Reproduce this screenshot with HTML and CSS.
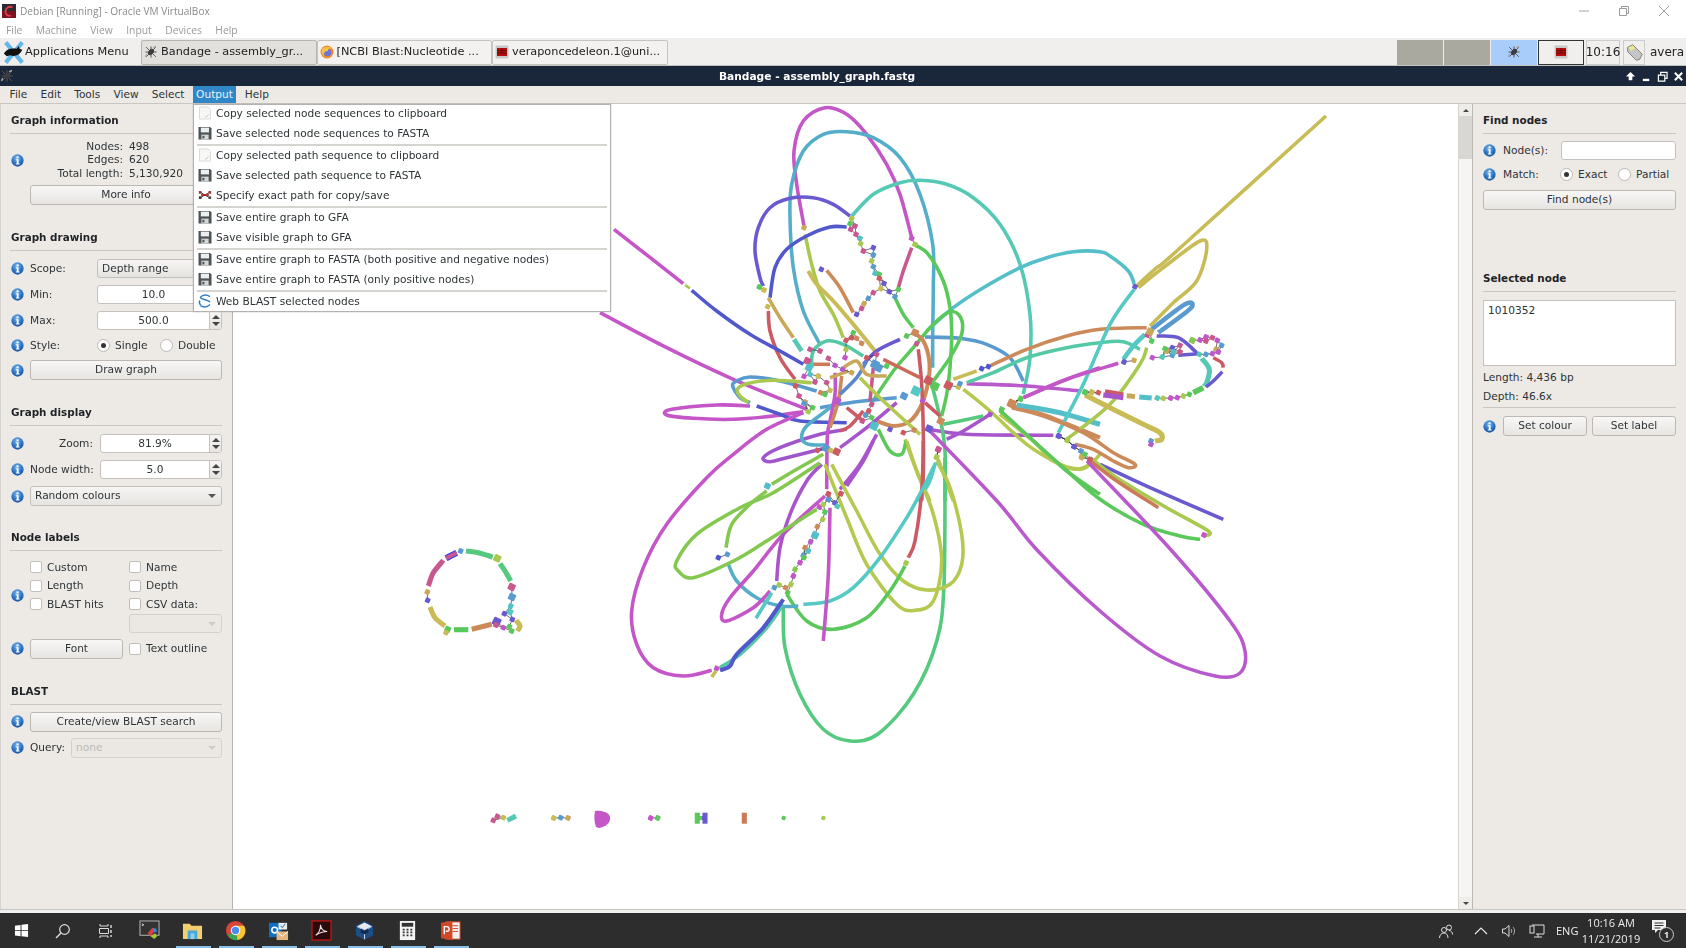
FILE: index.html
```html
<!DOCTYPE html>
<html lang="en">
<head>
<meta charset="utf-8">
<title>Debian [Running] - Oracle VM VirtualBox</title>
<link rel="stylesheet" href="styles.css">
</head>
<body>
<svg class="defs" width="0" height="0">
  <symbol id="i-info" viewBox="0 0 14 14">
    <defs><radialGradient id="g-info" cx=".45" cy=".3" r=".8"><stop offset="0" stop-color="#7db7ea"/><stop offset=".55" stop-color="#2a73c4"/><stop offset="1" stop-color="#124a93"/></radialGradient></defs>
    <circle cx="7" cy="7" r="6.6" fill="url(#g-info)"/>
    <rect x="6" y="2.6" width="2.2" height="2" fill="#fff"/>
    <path d="M5.2 5.6h3v4.6h1v1.2H5.2v-1.2h1V6.8h-1z" fill="#fff"/>
  </symbol>
  <symbol id="i-save" viewBox="0 0 14 14">
    <path d="M0.5 1h11.5l1.5 1.5V13.5H0.5z" fill="#4d5356"/>
    <rect x="2.8" y="1.6" width="8.2" height="4.8" fill="#eceff0"/>
    <rect x="3.4" y="8.6" width="7.2" height="4.9" fill="#d4d7d8"/>
    <rect x="4.4" y="9.8" width="2" height="2.6" fill="#4d5356"/>
  </symbol>
  <symbol id="i-copy" viewBox="0 0 14 14">
    <path d="M1.5 1h8.5l2.5 2.5V13H1.5z" fill="#f7f7f6" stroke="#dcdbd8"/>
    <path d="M7 11c1.5-.2 3-1.2 3.6-2.8" fill="none" stroke="#c6c6c4"/>
  </symbol>
  <symbol id="i-path" viewBox="0 0 16 14">
    <path d="M3 4l5 3-5 3M13 4l-5 3 5 3" fill="none" stroke="#333"/>
    <path d="M3.5 7h9" stroke="#b11d1d" stroke-width="2"/>
    <rect x="1" y="2.5" width="3" height="3" fill="#933"/><rect x="1" y="8.5" width="3" height="3" fill="#333"/>
    <rect x="12" y="2.5" width="3" height="3" fill="#933"/><rect x="12" y="8.5" width="3" height="3" fill="#444"/>
  </symbol>
  <symbol id="i-web" viewBox="0 0 14 14">
    <path d="M2 3.5C5 .5 9 .8 12 2.6M12 10.5C9 13.500 5 13.200 2 11.400M2 3.500C4 6 10 5.500 12 8M2 6.500C1 8 1.500 10 3 11" fill="none" stroke="#2f7fc4" stroke-width="1.400"/>
  </symbol>
  <symbol id="i-bug" viewBox="0 0 20 20">
    <path d="M3 3L17 17M17 3L3 17M10 2V18M2 10H18" stroke="#5b5b5b" stroke-width="1.400"/>
    <ellipse cx="10" cy="10" rx="3.500" ry="5" fill="#3d3d3d" transform="rotate(45 10 10)"/>
    <path d="M13 4l4-2M4 13l-2 4" stroke="#aaa" stroke-width="2"/>
  </symbol>
  <symbol id="i-mail" viewBox="0 0 14 14">
    <rect x="0.500" y="0.500" width="13" height="13" rx="1" fill="#c8c8c8"/>
    <rect x="2" y="3" width="10" height="8" fill="#b30d0d"/>
    <path d="M2 5.500h10M2 8h10M7 3v5" stroke="#5a0a0a" stroke-width=".8"/>
  </symbol>
</svg>

<div class="vm-title">
  <svg class="vm-logo" viewBox="0 0 14 14"><rect width="14" height="14" fill="#2b2b33"/><rect y="7" width="14" height="7" fill="#7a1622"/><path d="M10.500 3.500C7 1.500 3.500 4 3.500 7.500s3 5 5.500 4" fill="none" stroke="#e8394e" stroke-width="1.800"/></svg>
  <span>Debian [Running] - Oracle VM VirtualBox</span>
  <div class="vm-controls">
    <svg viewBox="0 0 12 12"><path d="M1 6h10" stroke="#a3a3a3"/></svg>
    <svg viewBox="0 0 12 12"><path d="M1.500 3.500h7v7h-7zM3.500 3.500v-2h7v7h-2" fill="none" stroke="#9a9a9a"/></svg>
    <svg viewBox="0 0 12 12"><path d="M1 1l10 10M11 1L1 11" stroke="#a3a3a3"/></svg>
  </div>
</div>
<div class="vm-menu"><span>File</span><span>Machine</span><span>View</span><span>Input</span><span>Devices</span><span>Help</span></div>

<div class="panel">
  <div class="apps">
    <svg class="apps-icon" viewBox="0 0 24 24"><path d="M3 1l18 22M21 1L3 23" stroke="#63b7ea" stroke-width="4.500"/><path d="M1 13c3-5 9-6 14-5l2-3 1 3 3 1-1 2c-2 4-8 6-12 4l-4 1z" fill="#111"/></svg>
    <span>Applications Menu</span>
  </div>
  <div class="tab active"><svg class="tab-icon"><use href="#i-bug"/></svg><span>Bandage - assembly_gr...</span></div>
  <div class="tab"><svg class="tab-icon" viewBox="0 0 14 14"><circle cx="7" cy="7" r="6.500" fill="#f08a2c"/><circle cx="7.500" cy="7.500" r="3.800" fill="#6d74d8"/><path d="M2 4c3-3 8-3 10 0-3-1-4 0-4 2-2 0-5 1-4 5C2 10 1 7 2 4z" fill="#f7c14a"/></svg><span>[NCBI Blast:Nucleotide ...</span></div>
  <div class="tab"><svg class="tab-icon"><use href="#i-mail"/></svg><span>veraponcedeleon.1@uni...</span></div>
  <div class="panel-fill"></div>
  <div class="pager"></div>
  <div class="pager"></div>
  <div class="pager pager-blue"><svg class="tab-icon"><use href="#i-bug"/></svg></div>
  <div class="pager pager-mail"><svg class="tab-icon"><use href="#i-mail"/></svg></div>
  <div class="clock">10:16</div>
  <div class="tray-box"><svg viewBox="0 0 22 22"><path d="M3 5l6-3 11 11-3 6-4 1-10-10z" fill="#c5c5c5" stroke="#777"/><path d="M4 5l5-2 3 3-5 3z" fill="#f1e68a"/></svg></div>
  <div class="user">avera</div>
</div>

<div class="titlebar">
  <svg class="titlebar-icon"><use href="#i-bug"/></svg>
  <span class="titlebar-text">Bandage - assembly_graph.fastg</span>
  <div class="titlebar-controls">
    <svg viewBox="0 0 12 12"><path d="M6 1l5 5H8v4H4V6H1z" fill="#fff"/></svg>
    <svg viewBox="0 0 12 12"><rect x="2" y="8.500" width="7" height="2.500" fill="#fff"/></svg>
    <svg viewBox="0 0 12 12"><path d="M1.500 4.500h7v6.500h-7zM4 4.500V1.500h7V8H8.500" fill="none" stroke="#fff" stroke-width="1.300"/></svg>
    <svg viewBox="0 0 12 12"><path d="M2 2l8 8M10 2l-8 8" stroke="#fff" stroke-width="2.200"/></svg>
  </div>
</div>

<div class="menubar">
  <span class="m m-file">File</span><span class="m">Edit</span><span class="m">Tools</span><span class="m">View</span><span class="m">Select</span>
  <div class="m m-open">Output
    <div class="dropdown">
      <div class="dd-item"><svg class="dd-icon"><use href="#i-copy"/></svg>Copy selected node sequences to clipboard</div>
      <div class="dd-item"><svg class="dd-icon"><use href="#i-save"/></svg>Save selected node sequences to FASTA</div>
      <div class="dd-sep"></div>
      <div class="dd-item"><svg class="dd-icon"><use href="#i-copy"/></svg>Copy selected path sequence to clipboard</div>
      <div class="dd-item"><svg class="dd-icon"><use href="#i-save"/></svg>Save selected path sequence to FASTA</div>
      <div class="dd-item"><svg class="dd-icon"><use href="#i-path"/></svg>Specify exact path for copy/save</div>
      <div class="dd-sep"></div>
      <div class="dd-item"><svg class="dd-icon"><use href="#i-save"/></svg>Save entire graph to GFA</div>
      <div class="dd-item"><svg class="dd-icon"><use href="#i-save"/></svg>Save visible graph to GFA</div>
      <div class="dd-sep"></div>
      <div class="dd-item"><svg class="dd-icon"><use href="#i-save"/></svg>Save entire graph to FASTA (both positive and negative nodes)</div>
      <div class="dd-item"><svg class="dd-icon"><use href="#i-save"/></svg>Save entire graph to FASTA (only positive nodes)</div>
      <div class="dd-sep"></div>
      <div class="dd-item"><svg class="dd-icon"><use href="#i-web"/></svg>Web BLAST selected nodes</div>
    </div>
  </div>
  <span class="m">Help</span>
</div>

<div class="main">
  <aside class="side left">
    <h2 class="heading">Graph information</h2>
    <div class="row row-info">
      <svg class="info"><use href="#i-info"/></svg>
      <div class="stats">
        <span class="k">Nodes:</span><span>498</span>
        <span class="k">Edges:</span><span>620</span>
        <span class="k">Total length:</span><span>5,130,920</span>
      </div>
    </div>
    <div class="row row-more"><span class="slot"></span><button class="btn grow">More info</button></div>

    <h2 class="heading h-next">Graph drawing</h2>
    <div class="stack">
      <div class="row"><svg class="info"><use href="#i-info"/></svg><span class="lbl lbl-w">Scope:</span><div class="combo grow">Depth range<i class="caret"></i></div></div>
      <div class="row"><svg class="info"><use href="#i-info"/></svg><span class="lbl lbl-w">Min:</span><div class="spin grow"><span class="spin-v">10.0</span><span class="spin-b"><i class="up"></i><i class="down"></i></span></div></div>
      <div class="row"><svg class="info"><use href="#i-info"/></svg><span class="lbl lbl-w">Max:</span><div class="spin grow"><span class="spin-v">500.0</span><span class="spin-b"><i class="up"></i><i class="down"></i></span></div></div>
      <div class="row row-style"><svg class="info"><use href="#i-info"/></svg><span class="lbl lbl-w">Style:</span><span class="radio on"></span><span class="opt opt-single">Single</span><span class="radio"></span><span class="opt">Double</span></div>
      <div class="row row-tall"><svg class="info"><use href="#i-info"/></svg><button class="btn grow">Draw graph</button></div>
    </div>

    <h2 class="heading h-next">Graph display</h2>
    <div class="stack">
      <div class="row"><svg class="info"><use href="#i-info"/></svg><span class="lbl lbl-r">Zoom:</span><div class="spin grow"><span class="spin-v">81.9%</span><span class="spin-b"><i class="up"></i><i class="down"></i></span></div></div>
      <div class="row"><svg class="info"><use href="#i-info"/></svg><span class="lbl lbl-r">Node width:</span><div class="spin grow"><span class="spin-v">5.0</span><span class="spin-b"><i class="up"></i><i class="down"></i></span></div></div>
      <div class="row row-tall"><svg class="info"><use href="#i-info"/></svg><div class="combo grow">Random colours<i class="caret"></i></div></div>
    </div>

    <h2 class="heading h-labels">Node labels</h2>
    <div class="labels">
      <svg class="info"><use href="#i-info"/></svg>
      <div class="label-grid">
        <label class="check"><i class="box"></i>Custom</label><label class="check"><i class="box"></i>Name</label>
        <label class="check"><i class="box"></i>Length</label><label class="check"><i class="box"></i>Depth</label>
        <label class="check"><i class="box"></i>BLAST hits</label><label class="check"><i class="box"></i>CSV data:</label>
        <span></span><div class="combo off csv"><i class="caret"></i></div>
      </div>
    </div>
    <div class="row row-font"><svg class="info"><use href="#i-info"/></svg><button class="btn font-btn">Font</button><label class="check"><i class="box"></i>Text outline</label></div>

    <h2 class="heading h-next">BLAST</h2>
    <div class="stack stack-blast">
      <div class="row row-tall"><svg class="info"><use href="#i-info"/></svg><button class="btn grow">Create/view BLAST search</button></div>
      <div class="row row-tall"><svg class="info"><use href="#i-info"/></svg><span class="lbl lbl-q">Query:</span><div class="combo off grow">none<i class="caret"></i></div></div>
    </div>
  </aside>

  <div class="canvas"><svg id="graph" viewBox="233 103 1225 806"></svg></div>

  <div class="scrollbar">
    <span class="sb-arrow"><i class="up"></i></span>
    <span class="sb-thumb"></span>
    <span class="sb-track"></span>
    <span class="sb-arrow"><i class="down"></i></span>
  </div>

  <aside class="side right">
    <h2 class="heading">Find nodes</h2>
    <div class="row row-find"><svg class="info"><use href="#i-info"/></svg><span class="lbl lbl-n">Node(s):</span><div class="input grow"></div></div>
    <div class="row row-match"><svg class="info"><use href="#i-info"/></svg><span class="lbl lbl-n">Match:</span><span class="radio on"></span><span class="opt opt-exact">Exact</span><span class="radio"></span><span class="opt">Partial</span></div>
    <button class="btn wide">Find node(s)</button>
    <h2 class="heading h-selected">Selected node</h2>
    <div class="textarea">1010352</div>
    <div class="meta">Length: 4,436 bp</div>
    <div class="meta">Depth: 46.6x</div>
    <div class="rule"></div>
    <div class="row"><svg class="info"><use href="#i-info"/></svg><button class="btn grow">Set colour</button><button class="btn grow btn-next">Set label</button></div>
  </aside>
</div>

<div class="strip"></div>

<footer class="taskbar">
  <svg class="tb tb-win" viewBox="0 0 16 16"><path d="M1 2.800L7 2v5.600H1zM8 1.800L15 1v6.600H8zM1 8.500h6v5.600l-6-.8zM8 8.500h7V15l-7-1z" fill="#fff"/></svg>
  <svg class="tb tb-search" viewBox="0 0 16 16"><circle cx="9.500" cy="6.500" r="4.800" fill="none" stroke="#ddd" stroke-width="1.200"/><path d="M6 10l-5 5" stroke="#ddd" stroke-width="1.400"/></svg>
  <svg class="tb tb-view" viewBox="0 0 16 16"><path d="M3 1v2h8V1M3 15v-2h8v2M2.500 5.500h9v5h-9z" fill="none" stroke="#ddd"/><path d="M14 2v3M14 7v3M14 12v2" stroke="#ddd" stroke-width="1.400"/></svg>
  <svg class="tb tb-app" viewBox="0 0 22 22"><rect x="1" y="1" width="20" height="15" fill="#333" stroke="#bbb"/><path d="M3 4l2 1-2 1" stroke="#ddd" fill="none"/><path d="M9 14l5-6 3 3-5 6z" fill="#d9433f"/><path d="M14 8l4 1 1 3-3 1z" fill="#3c7ed8"/><path d="M12 17l5-3 2 3-3 3z" fill="#9ccc3c"/></svg>
  <svg class="tb tb-app" viewBox="0 0 22 22"><path d="M1 4h7l2 2h11v14H1z" fill="#f3cf6f"/><rect x="6" y="11" width="10" height="9" fill="#46a7d8"/><rect x="9" y="14" width="4" height="6" fill="#8bd0ee"/></svg>
  <svg class="tb tb-app" viewBox="0 0 22 22"><circle cx="11" cy="11" r="10" fill="#d9443a"/><path d="M11 11L3 16a10 10 0 0 0 10 5z" fill="#36a853"/><path d="M11 6h9a10 10 0 0 1-7 15z" fill="#f7c52d"/><circle cx="11" cy="11" r="5" fill="#fff"/><circle cx="11" cy="11" r="3.800" fill="#4b8bf0"/></svg>
  <svg class="tb tb-app" viewBox="0 0 22 22"><rect x="1" y="3" width="13" height="15" fill="#0d70c4"/><circle cx="7" cy="10.500" r="3" fill="none" stroke="#fff" stroke-width="1.600"/><rect x="11" y="3" width="9" height="7" fill="#fff" opacity=".9"/><path d="M13 6l2 2 3-4" stroke="#1465b0" fill="none"/><rect x="9" y="12" width="12" height="9" fill="#e6b77d"/><path d="M9 12l6 5 6-5" fill="none" stroke="#fff"/></svg>
  <svg class="tb tb-app" viewBox="0 0 22 22"><rect x="1" y="1" width="20" height="20" fill="#2a0b0b" stroke="#c11414" stroke-width="1.400"/><path d="M5 16c3-2 5-6 5-11 0 4 3 7 7 7-4 0-8 1-12 4z" fill="none" stroke="#f0e4e4" stroke-width="1.100"/></svg>
  <svg class="tb tb-app" viewBox="0 0 22 22"><path d="M11 1l9 5v10l-9 5-9-5V6z" fill="#1b4f86"/><path d="M11 2.500l7.500 4-7.500 4-7.500-4z" fill="#e6eaf0"/><path d="M11 11v9M3.500 7L11 11l7.500-4" stroke="#dde" fill="none"/><path d="M7 9l4 2 4-2v4l-4 2-4-2z" fill="#0f2d52"/></svg>
  <svg class="tb tb-app" viewBox="0 0 22 22"><rect x="3" y="1" width="16" height="20" fill="#f4f4f4"/><rect x="5" y="3" width="12" height="4" fill="#333"/><path d="M6 10h2M10 10h2M14 10h2M6 13h2M10 13h2M14 13h2M6 16h2M10 16h2M14 16h2" stroke="#333" stroke-width="1.800"/></svg>
  <svg class="tb tb-app" viewBox="0 0 22 22"><rect x="6" y="2" width="15" height="18" fill="#f2f0ee" stroke="#d24726"/><path d="M13 6h6M13 9h6M13 12h6" stroke="#d24726"/><path d="M1 3l12-2v20L1 19z" fill="#d24726"/><path d="M4.500 15V7h2.700a2.200 2.200 0 0 1 0 4.800H6" fill="none" stroke="#fff" stroke-width="1.400"/></svg>
  <div class="underlines"><i></i><i></i><i></i><i></i><i></i><i></i><i></i></div>

  <div class="tray">
    <svg class="tr tr-person" viewBox="0 0 16 16"><circle cx="11" cy="4.500" r="2.500" fill="none" stroke="#ddd"/><circle cx="6" cy="7" r="2.500" fill="none" stroke="#ddd"/><path d="M1.500 15c0-3 2-5 4.500-5s4 2 4 5M11 7.500c2 0 3.500 1.500 3.500 4" fill="none" stroke="#ddd"/></svg>
    <svg class="tr tr-chev" viewBox="0 0 16 16"><path d="M2 11l6-6 6 6" fill="none" stroke="#e6e6e6" stroke-width="1.200"/></svg>
    <svg class="tr tr-sound" viewBox="0 0 16 16"><path d="M1.500 6h2.500l4-3.500v11L4 10H1.500z" fill="none" stroke="#ddd"/><path d="M10 6c1 1 1 3 0 4M12 4c2 2 2 6 0 8" fill="none" stroke="#aaa"/></svg>
    <svg class="tr tr-net" viewBox="0 0 16 16"><path d="M3 2h12v9H7M9 11v3M5 14h8" fill="none" stroke="#ddd"/><rect x="1" y="3" width="4" height="7" fill="#2d2d2d" stroke="#ddd"/></svg>
    <span class="tr-lang">ENG</span>
    <div class="tr-time"><span>10:16 AM</span><span>11/21/2019</span></div>
    <div class="tr-note"><svg viewBox="0 0 14 14"><path d="M0 0h14v10H6L3 13v-3H0z" fill="#f2f2f2"/><path d="M2.500 3h9M2.500 5.500h9M2.500 8h6" stroke="#2d2d2d"/></svg><span class="badge">1</span></div>
  </div>
</footer>
<script src="graph.js"></script>
</body>
</html>
```
FILE: styles.css
```css
* { box-sizing: border-box; }
html, body { margin: 0; height: 100%; }
body {
  width: 1686px; height: 948px; overflow: hidden; display: flex; flex-direction: column;
  background: #fff; color: #2e3436;
  font: 10.6px/1.2 "DejaVu Sans", sans-serif;
  filter: blur(.35px);
}
.defs { position: absolute; }
button { font: inherit; color: inherit; }

.vm-title { height: 22px; flex: none; display: flex; align-items: center; font: 10.1px "Open Sans", sans-serif; color: #8a8a8a; padding-left: 2px; }
.vm-logo { width: 14px; height: 14px; margin-right: 4px; }
.vm-controls { margin-left: auto; display: flex; gap: 28px; margin-right: 16px; }
.vm-controls svg { width: 12px; height: 12px; }
.vm-menu { height: 16px; flex: none; display: flex; gap: 13.500px; padding-left: 6px; align-items: center; font: 10.3px "Open Sans", sans-serif; color: #9a9a9a; }

.panel { height: 28px; flex: none; display: flex; align-items: center; background: #f0efed; border-bottom: 1px solid #c4c2be; padding: 1px 0 0 3px; color: #222; font-size: 11.3px; }
.apps { width: 138px; display: flex; align-items: center; gap: 0; }
.apps-icon { width: 22px; height: 23px; flex: none; }
.tab { width: 175.500px; height: 25px; display: flex; align-items: center; padding-left: 2px; gap: 3px; border: 1px solid #c6c4bf; border-radius: 2px; background: #f3f2f0; white-space: nowrap; }
.tab.active { background: #e2e0dc; border-color: #b7b5b0; }
.tab-icon { width: 14px; height: 14px; flex: none; }
.panel-fill { flex: 1; }
.pager { width: 46px; height: 25px; background: #aaa9a0; margin-right: 1px; display: flex; align-items: center; justify-content: center; }
.pager-blue { background: #a9cdfb; }
.pager-mail { background: #f0efed; border: 1px solid #333; }
.clock { width: 34px; height: 25px; margin-left: 1px; border: 1px solid #ccc; display: flex; align-items: center; justify-content: center; font-size: 12px; }
.tray-box { width: 22px; height: 25px; margin-left: 3px; border: 1px solid #ccc; display: flex; align-items: center; justify-content: center; }
.tray-box svg { width: 19px; height: 19px; }
.user { width: 41px; padding-left: 5px; font-size: 12px; }

.titlebar { height: 20px; flex: none; position: relative; display: flex; align-items: center; background: #1a2639; color: #fff; }
.titlebar-icon { width: 14px; height: 14px; }
.titlebar-text { position: absolute; left: 0; width: 1634px; margin-top: 2px; text-align: center; font-weight: bold; font-size: 10.650px; }
.titlebar-controls { margin-left: auto; display: flex; gap: 5px; padding-right: 2px; }
.titlebar-controls svg { width: 11px; height: 11px; }

.menubar { height: 18px; flex: none; display: flex; align-items: center; background: #edeae6; padding-left: 3px; border-bottom: 1px solid #c9c6c1; position: relative; z-index: 5; }
.m { padding: 0 6.600px; height: 17px; line-height: 17px; }
.m-open { position: absolute; left: 193px; width: 43px; padding: 0; text-align: center; background: #2f87c8; color: #e8f2fa; }
.m-open + .m { margin-left: 47px; }
.dropdown { position: absolute; left: 0; top: 18px; width: 418px; height: 208px; background: #fff; border: 1px solid #b4b2ae; color: #2e3436; text-align: left; box-shadow: 0 0 1px #999; }
.dd-item { height: 20px; display: flex; align-items: center; padding: 0 0 2px 4px; white-space: nowrap; }
.dd-item:first-child { margin-top: -1px; }
.dd-icon { width: 14px; height: 14px; margin-right: 4px; flex: none; }
.dd-sep { height: 2px; margin: 0 3px; background: #d6d4d0; }

.main { height: 806px; flex: none; display: flex; background: #edeae6; border-bottom: 1px solid #c9c6c1; }
.side { flex: none; background: #edeae6; padding-top: 10px; }
.left { width: 233px; padding-left: 9px; padding-right: 10px; border-right: 1px solid #b6b3ae; border-left: 1px solid #d5d3cf; }
.left .heading { padding-left: 1px; }
.left .info { margin-left: 1px; margin-right: 6px; }
.right { width: 215px; padding-left: 10px; padding-right: 11px; border-left: 1px solid #bcb9b4; }
.heading { height: 20px; margin: 0; font-size: 10.400px; font-weight: bold; line-height: 13px; color: #1f2326; border-bottom: 1.500px solid #c9c6c1; }
.h-next { margin-top: 26px; }
.h-labels { margin-top: 25px; }
.h-selected { margin-top: 62px; }
.row { display: flex; align-items: center; height: 20px; white-space: nowrap; }
.info { width: 13px; height: 13px; flex: none; margin-right: 7px; }
.slot { width: 20px; flex: none; }
.grow { flex: 1; min-width: 0; }
.row-info { height: 40px; margin-top: 6px; }
.stats { display: grid; grid-template-columns: 93px auto; column-gap: 6px; line-height: 13.300px; }
.k { text-align: right; }
.row-more { margin-top: 5px; }
.stack { display: flex; flex-direction: column; gap: 7px; margin-top: 8px; }
.stack .row { height: 19px; }
.stack .row-tall { height: 20px; }
.stack .row-style { height: 17px; margin-bottom: -1px; }
.stack-blast { margin-top: 7px; gap: 6px; }
.lbl-w { width: 67px; flex: none; }
.lbl-r { width: 70px; padding-right: 7px; text-align: right; flex: none; }
.lbl-q { width: 41px; flex: none; }
.lbl-n { width: 58px; flex: none; }
.btn { height: 20px; padding: 0 0 1px; background: linear-gradient(#f8f7f6, #e7e5e2); border: 1px solid #bcb9b4; border-radius: 3px; text-align: center; }
.btn-next { margin-left: 5px; }
.combo { position: relative; height: 100%; line-height: 17px; padding-left: 4px; background: linear-gradient(#f6f5f3, #e6e4e1); border: 1px solid #c2bfba; border-radius: 3px; }
.combo.off { background: #ebe8e4; color: #bdbab6; border-color: #d4d1cd; }
.caret { position: absolute; right: 5px; top: 7px; border: 4px solid transparent; border-top: 4px solid #555; border-bottom: 0; }
.combo.off .caret { border-top-color: #ccc; }
.spin { display: flex; height: 100%; background: #fff; border: 1px solid #c5c2bd; border-radius: 3px; overflow: hidden; }
.spin-v { flex: 1; text-align: center; line-height: 16px; }
.spin-b { width: 12px; flex: none; display: flex; flex-direction: column; align-items: center; justify-content: center; gap: 3px; background: linear-gradient(#f6f5f3, #e6e4e1); border-left: 1px solid #c5c2bd; }
.up, .down { display: block; width: 0; height: 0; border: 4px solid transparent; }
.up { border-top: 0; border-bottom: 4px solid #444; }
.down { border-bottom: 0; border-top: 4px solid #444; }
.radio { width: 13px; height: 13px; flex: none; margin-right: 5px; border-radius: 50%; background: #fff; border: 1px solid #bcb9b4; position: relative; }
.radio.on::after { content: ""; position: absolute; left: 3px; top: 3px; width: 5px; height: 5px; border-radius: 50%; background: #333; }
.opt-single { width: 45px; }
.opt-exact { width: 41px; }
.labels { display: flex; align-items: flex-start; margin-top: 7px; }
.labels .info { margin-top: 31px; }
.label-grid { display: grid; grid-template-columns: 99px 93px; grid-auto-rows: 18.400px; }
.check { display: flex; align-items: center; }
.box { width: 12px; height: 12px; margin-right: 5px; background: #fff; border: 1px solid #c2bfba; border-radius: 2px; flex: none; }
.csv { height: 19px; margin-top: 1px; }
.row-font { margin-top: 7px; }
.font-btn { width: 93px; margin-right: 6px; }

.canvas { width: 1225px; flex: none; background: #fff; }
#graph { display: block; width: 1225px; height: 806px; }
.scrollbar { width: 14px; flex: none; display: flex; flex-direction: column; align-items: center; background: #f6f5f3; border-left: 1px solid #d7d5d1; }
.sb-arrow { height: 12px; width: 100%; flex: none; display: flex; align-items: center; justify-content: center; background: #efedea; }
.sb-arrow i { border-width: 3px; border-left-color: transparent; }
.sb-thumb { height: 43px; width: 100%; flex: none; background: #d9d7d3; }
.sb-track { flex: 1; }

.row-find { height: 19px; margin-top: 7px; }
.row-match { height: 18px; margin-top: 5px; }
.row-match .radio { margin-left: -1px; }
.input { height: 19px; background: #fff; border: 1px solid #c5c2bd; border-radius: 3px; }
.wide { display: block; width: 100%; margin-top: 7px; }
.textarea { height: 66px; margin-top: 8px; background: #fff; border: 1px solid #c5c2bd; padding: 3px 4px; }
.meta { height: 19px; line-height: 19px; }
.textarea + .meta { margin-top: 2px; }
.rule { height: 1px; background: #c9c6c1; margin: 1px 0 8px; }

.strip { height: 3px; flex: none; background: #f0f0ee; }
.taskbar { flex: 1; position: relative; display: flex; align-items: center; background: #2d2d2d; color: #eee; font: 11px "Open Sans", sans-serif; }
.tb { flex: none; }
.tb-win { width: 15px; height: 15px; margin-left: 14px; }
.tb-search { width: 16px; height: 16px; margin-left: 26px; }
.tb-view { width: 16px; height: 16px; margin-left: 26px; }
.tb-app { width: 21px; height: 21px; margin-left: 22px; }
.tb-view + .tb-app { margin-left: 26px; }
.underlines { position: absolute; left: 176px; bottom: 0; display: flex; gap: 8px; }
.underlines i { display: block; width: 35px; height: 2px; background: #8ac1ea; }
.tray { margin-left: auto; display: flex; align-items: center; height: 100%; padding-right: 3px; }
.tr { width: 16px; height: 16px; flex: none; }
.tr-chev { margin-left: 19px; }
.tr-sound { margin-left: 12px; }
.tr-net { margin-left: 12px; }
.tr-lang { margin-left: 11px; width: 24px; font-size: 11px; }
.tr-time { margin-left: -3px; width: 68px; display: flex; flex-direction: column; align-items: center; line-height: 16px; font-size: 11px; }
.tr-note { position: relative; width: 22px; height: 22px; margin-left: 7px; margin-right: 9px; }
.tr-note svg { width: 14px; height: 14px; display: block; }
.badge { position: absolute; left: 7px; top: 7px; width: 15px; height: 15px; border: 1px solid #ccc; border-radius: 50%; background: #2d2d2d; text-align: center; font-size: 9px; line-height: 13px; font-weight: bold; }
```
FILE: graph.js
```js
// Draws the assembly graph: contigs as smooth thick curves, short nodes as small blocks.
const ORIGIN = { A: [600, 100], B: [1000, 250], C: [640, 440], D: [410, 530] };
const c = { mag: '#c456c8', sky: '#55aec9', teal: '#55c9b4', pb: '#6a5acf', blu: '#5058cc', grn: '#5ac85a', lime: '#a9c850', ylw: '#b5c850', kha: '#c9bb55', ora: '#cc8a5a', red: '#cc5a63', pnk: '#c9588f', pur: '#a855cc', lb: '#5a9bcf', cy: '#55bfc9', cy2: '#55c9c4', mnt: '#55c97e', lg: '#84c850', tan: '#c9a85a', pm: '#b85acc' };

const CURVES = [
  ['A', c.mag, 3.5, [612,375,590,250,582,150,610,60,675,20,740,40,800,100,860,190,900,280,935,410]],
  ['A', c.lime, 3.5, [615,400,635,490,660,570,700,640,730,710]],
  ['A', c.sky, 3.5, [660,730,610,630,580,500,570,350,575,250,610,150,670,100,740,92,820,110,900,170,960,280,998,430,1000,560,998,700,998,800]],
  ['A', c.teal, 3.5, [755,345,820,280,900,245,960,238,1040,250,1120,290,1200,370,1260,490,1290,640,1290,770,1270,880]],
  ['A', c.pb, 3.5, [750,345,700,310,640,290,570,292,510,320,475,380,465,450,480,530,490,555]],
  ['A', c.blu, 3.5, [740,378,690,378,620,405,560,445,525,500,510,590]],
  ['A', c.tan, 3.5, [505,590,540,650,580,710]],
  ['A', c.red, 3.5, [505,630,510,690,540,770,585,835]],
  ['A', c.teal, 4.5, [582,715,605,750]],
  ['A', c.mag, 3.5, [42,385,250,548]],
  ['A', c.lime, 2.5, [255,552,270,562]],
  ['A', c.blu, 3.5, [275,568,350,630,450,700,540,750,610,790]],
  ['A', c.mag, 3.5, [0,635,200,740,400,835,620,925]],
  ['A', c.mag, 3.5, [450,915,350,912,215,925,200,942,280,952,400,955,520,945,610,932]],
  ['A', c.lb, 3.5, [650,870,540,840,450,828,410,840,398,855,420,890,450,905]],
  ['A', c.blu, 3.5, [470,915,540,940,600,960,740,965]],
  ['A', c.lime, 3.5, [635,845,520,838,440,848,412,865,420,885,445,905]],
  ['A', c.kha, 4, [625,510,650,550,700,600,760,670,825,750]],
  ['A', c.ora, 3.5, [680,508,720,560,760,635]],
  ['A', c.pb, 3.5, [790,790,830,750,900,715]],
  ['A', c.lb, 3.5, [975,708,1080,712,1160,730,1230,770,1270,840]],
  ['A', c.cy, 3.5, [980,690,1060,620,1150,560,1260,500,1340,470,1420,452,1500,452,1530,465,1585,510,1603,550]],
  ['A', c.grn, 3.5, [945,432,985,460,1030,540,1050,620,1055,700,1050,800,1040,880,1025,945]],
  ['A', c.pnk, 3.5, [935,440,910,510,895,560]],
  ['A', c.grn, 3.5, [885,590,910,640,940,680]],
  ['A', c.grn, 3.5, [815,905,880,810,940,740,1000,670,1050,632,1082,650,1085,700,1050,770,1000,840]],
  ['A', c.ora, 4, [830,960,880,975,930,960,965,910,985,840,988,780,970,720,940,695]],
  ['A', c.red, 3.5, [955,745,965,850,970,1000,970,1120,965,1200]],
  ['A', '#cc6a5a', 3.5, [850,775,960,830]],
  ['A', c.lb, 3.5, [660,920,750,905,890,890]],
  ['A', c.pur, 3.5, [720,1040,800,980,890,905]],
  ['A', c.pur, 3.5, [985,985,1100,1000,1360,1003]],
  ['A', c.pur, 3.5, [1040,1015,1090,990,1170,940]],
  ['A', c.pm, 3.5, [1100,848,1280,855,1440,870]],
  ['A', c.mag, 3.5, [1270,890,1400,835,1500,800]],
  ['A', c.ora, 3.5, [1170,795,1280,745,1400,705,1500,685,1640,680]],
  ['A', '#55c9a5', 3.5, [1100,845,1180,815,1280,770,1400,740,1500,725,1570,722,1620,745]],
  ['A', c.kha, 3.5, [1060,835,1130,810]],
  ['A', c.mnt, 3.5, [990,830,1020,950,1035,1050,1035,1200]],
  ['A', c.ylw, 3.5, [915,1015,950,1110,990,1200]],
  ['A', c.ylw, 3.5, [1015,1075,1060,1200]],
  ['A', c.cy2, 3.5, [1005,1090,985,1150,950,1200]],
  ['A', c.grn, 3.5, [835,985,870,1050,905,1060,918,1020]],
  ['A', '#a055cc', 3.5, [680,1040,560,1070,510,1082,490,1070,540,1040,660,1000,740,985]],
  ['A', c.red, 3.5, [720,990,750,975,790,930]],
  ['A', c.sky, 3.5, [720,885,690,920,620,975,605,1010,625,1030,680,1032]],
  ['A', c.mag, 3.5, [705,815,705,880,690,960,682,1010,680,1165]],
  ['A', c.ora, 3.5, [725,825,715,900,690,980]],
  ['A', c.pnk, 3.5, [820,800,810,900]],
  ['A', '#5a88cf', 3.5, [720,880,770,830,800,780]],
  ['A', c.pur, 3.5, [830,1000,780,1090,720,1165]],
  ['A', c.ylw, 3.5, [780,830,850,900,960,1000]],
  ['A', c.ylw, 3.5, [1090,865,1170,930,1280,1030,1380,1090,1430,1105,1470,1090,1500,1060]],
  ['A', c.grn, 3.5, [1200,930,1300,1020,1400,1110,1500,1180]],
  ['A', c.ora, 4, [1240,915,1340,945,1500,1010]],
  ['A', c.cy, 5, [1250,912,1380,935,1500,970]],
  ['A', '#55c9a5', 3.5, [635,800,640,750,680,720,730,730,790,765]],
  ['A', c.tan, 3.5, [690,830,745,810]],
  ['A', c.tan, 3.5, [730,800,770,780,800,820,860,825]],
  ['A', '#cc7a55', 3.5, [640,790,690,790]],
  ['A', c.red, 3.5, [975,905,1020,945]],
  ['A', c.red, 3.5, [740,920,790,960]],
  ['A', c.mnt, 3.5, [1030,970,1150,945]],
  // right lobe
  ['B', c.cy2, 3.5, [175,545,250,400,330,220,403,115]],
  ['B', c.lime, 3.5, [200,565,330,460,420,340,440,290]],
  ['B', c.kha, 3.5, [410,105,470,50,530,0,978,-405]],
  ['B', c.kha, 3.5, [415,110,490,50,600,-30,620,-5,590,90,520,155,450,225]],
  ['B', c.cy2, 4.5, [370,325,400,285,435,250]],
  ['B', c.lb, 4.5, [455,235,555,160,572,172,475,245]],
  ['B', c.pb, 3.5, [470,255,535,260,590,305]],
  ['B', c.pb, 3.5, [535,313,595,308]],
  ['B', c.teal, 5, [605,322,628,355,620,395,612,405]],
  ['B', c.red, 3.5, [640,320,665,335,670,350]],
  ['B', c.pb, 3.5, [667,362,640,390,618,408]],
  ['B', c.grn, 5.5, [580,425,610,410]],
  ['B', c.red, 5, [315,422,370,432]],
  ['B', c.pur, 5, [310,432,370,440]],
  ['B', c.tan, 5, [380,434,405,437]],
  ['B', c.cy, 5, [418,438,455,441]],
  ['B', c.mag, 3.5, [70,440,200,385,355,337]],
  ['B', c.kha, 5, [255,432,330,470,430,520,480,545,485,565,465,570]],
  ['B', c.ora, 3.5, [35,470,130,495,250,545,340,605,405,640,385,650,340,630,280,595,225,580]],
  ['B', c.ylw, 3.5, [0,490,100,570,160,630,235,655,265,645]],
  ['B', c.grn, 3.5, [0,478,90,560,190,650,300,745,430,820,540,855,600,865]],
  ['B', c.pb, 3.5, [300,640,450,710,670,805]],
  ['B', c.lime, 3.5, [270,620,350,680,500,770,625,840,610,855]],
  ['B', '#cc7a55', 3.5, [265,625,350,690,475,770]],
  ['B', c.pm, 3.5, [-216,534,-9,750,114,900,300,1080,480,1215,645,1275,720,1266,735,1200,690,1110,516,900,261,630]],
  // lower lobes
  ['C', c.mag, 3.5, [490,-85,380,-35,280,40,200,110,80,250,10,380,-25,510,-10,610,40,680,130,705,215,688]],
  ['C', c.mnt, 3.5, [430,500,435,620,480,760,550,865,630,900,715,878,820,760,890,600,912,430,915,50]],
  ['C', c.ylw, 3.5, [555,70,620,230,680,370,770,490,825,508,880,480,905,360,880,220,830,90,800,0]],
  ['C', c.ylw, 3.5, [575,70,650,210,720,340,790,420,860,447,930,430,965,370,965,280,930,140,890,60]],
  ['C', c.red, 3.5, [850,0,845,150,825,300,805,350]],
  ['C', c.grn, 3.5, [440,460,500,540,580,565,680,530,750,450,795,375]],
  ['C', c.cy2, 3.5, [490,490,570,480,640,440,720,350,800,230,850,140,887,65]],
  ['C', c.mag, 3.5, [570,200,565,400,550,600]],
  ['C', c.sky, 3.5, [265,370,290,420,350,470,420,495,475,495]],
  ['C', c.mag, 3.5, [390,450,340,500,260,540,245,520,270,470,340,390,430,280,555,165]],
  ['C', c.cy2, 3.5, [395,455,348,532]],
  ['C', c.pur, 3.5, [410,420,420,320,450,220,500,120,545,70]],
  ['C', c.lg, 3.5, [530,205,380,300,280,360,160,410,115,390,110,360,170,280,300,200,400,155,540,65]],
  ['C', c.lg, 3.5, [258,320,275,250,330,190,380,150]],
  ['C', c.lg, 3.5, [395,130,470,85,550,40]],
  ['C', c.pur, 3.5, [620,135,670,60,700,0]],
  ['C', '#55c9a5', 3.5, [240,680,300,640,380,560,430,490]],
  ['C', c.blu, 4, [240,688,270,675,290,640,370,560,430,475]],
  ['C', c.kha, 3.5, [228,690,215,708]],
  // small ring
  ['D', c.pnk, 5, [55,165,70,125,100,88]],
  ['D', '#3a3af0', 6, [108,82,140,65]],
  ['D', c.pnk, 4, [108,82,140,65]],
  ['D', c.mnt, 5, [168,60,205,65,248,78]],
  ['D', c.mnt, 5, [270,98,285,120,302,150]],
  ['D', c.kha, 5, [318,268,330,285,322,300]],
  ['D', c.ora, 5, [185,295,245,280]],
  ['D', c.grn, 5, [132,296,175,296]],
  ['D', c.kha, 5, [60,228,75,260,105,285]],
  // small islands
  ['D', c.teal, 5, [292,868,318,855]],
  ['D', c.grn, 5, [862,845,862,878]],
  ['D', c.pb, 5, [885,845,885,878]],
  ['D', c.grn, 4, [862,861,875,861]],
  ['D', c.pb, 4, [875,861,885,861]],
  ['D', '#cc7a55', 5, [1003,845,1003,878]]
];

const NODES = [
  ['A', c.lime,755,352],['A', c.grn,750,368],['A', c.pnk,765,375],['A', c.pnk,752,385],['A', c.pnk,768,400],['A', c.cy,780,412],['A', c.lime,782,428],['A', c.pnk,790,450],['A', c.lime,815,480],['A', c.lb,820,497],['A', c.cy,825,517],['A', c.grn,838,520],['A', c.red,838,532],['A', c.pb,852,547],['A', c.kha,842,563],['A', c.pnk,820,575],['A', c.lb,805,592],['A', c.tan,792,608],['A', c.pnk,785,622],['A', c.pb,770,640],
  ['A', c.pb,820,440],['A', c.lb,820,462],['A', c.pb,868,572],['A', c.lb,885,587],['A', c.grn,895,565],
  ['A', c.grn,478,558],['A', c.kha,492,567],['A', c.kha,503,617],['A', c.pb,664,505],['A', c.tan,612,380],['A', c.mag,935,412],['A', c.lime,945,430],
  ['A', c.grn,760,695],['A', c.red,738,718],['A', c.red,755,710],['A', c.ora,770,712],['A', c.ora,785,727],['A', c.lime,738,745],['A', c.mag,735,770],['A', c.red,800,770],['A', c.pnk,830,760],['A', c.lb,825,790,8],['A', c.lb,835,800,8],['A', c.grn,860,795],
  ['A', c.pnk,630,745],['A', c.pnk,660,750],['A', c.pnk,685,772],['A', c.pm,705,793],['A', c.pm,728,805],['A', c.tan,755,815],['A', c.pnk,622,780,7],['A', c.cy,627,800,7],['A', c.cy,630,820],['A', c.mag,612,826],['A', c.kha,655,825],['A', c.pnk,645,843],['A', c.pnk,680,845],['A', c.red,587,855],['A', c.pnk,597,885],['A', c.tan,615,903],['A', c.lb,612,907],['A', c.grn,638,920],['A', c.lime,625,932],['A', c.ora,662,875],['A', c.grn,675,880],['A', c.kha,690,868],['A', c.pm,712,900,7],
  ['A', c.grn,920,705],['A', c.ora,945,695,7],['A', c.pnk,950,728],['A', c.lb,912,885,7],['A', c.cy2,948,870,9],['A', c.pm,968,898],['A', c.red,985,838,8],['A', c.grn,1005,855,8],['A', c.red,1045,853,8],['A', c.kha,1075,858],['A', c.lb,1080,848],['A', c.blu,1145,803],['A', c.blu,1165,797],['A', c.ora,1022,960,7],['A', c.pb,987,983,7],['A', c.ora,942,987],['A', c.red,910,995],['A', c.pb,870,985],['A', c.cy,822,975,8],['A', c.grn,815,950],['A', c.lb,797,942],['A', c.pnk,787,960],['A', c.red,806,930],['A', c.pnk,815,910],['A', c.pnk,1015,1045],['A', c.lime,1010,1070],['A', c.pur,1170,940],['A', c.grn,1205,925],['A', c.ora,1235,908,8],['A', c.grn,1262,892],['A', c.pb,1375,1005],['A', c.lime,1402,1018],['A', c.pb,1422,1037],['A', c.kha,1445,1065],['A', c.grn,1455,875],['A', c.kha,1475,875],['A', c.red,652,1048],['A', c.lb,678,1042,7],['A', c.kha,692,1048],['A', c.red,710,1052,7],['A', c.pb,503,1155],['A', c.red,685,1178],['A', c.red,722,1178],['A', c.lb,685,1195],
  ['B', c.pb,405,107],
  ['B', c.pb,372,333],['B', c.tan,402,328],['B', c.pnk,442,252],['B', c.tan,450,242,7],['B', c.grn,455,270],['B', c.mag,457,320],['B', c.teal,487,318],['B', c.tan,500,300],['B', c.grn,495,293],['B', c.lb,517,313],['B', c.pb,517,290],['B', c.cy,520,303],['B', c.pnk,540,283],['B', c.pnk,540,303],['B', c.lg,577,268,6],['B', c.mag,600,267],['B', c.mag,618,258],['B', c.pnk,618,270],['B', c.pnk,637,260],['B', c.pm,652,268],['B', c.lb,665,283],['B', c.tan,648,295],['B', c.pm,655,303],['B', c.pm,637,308],['B', c.lb,618,310],['B', c.teal,598,310],
  ['B', c.grn,255,422],['B', c.kha,275,423],['B', c.red,295,425],['B', c.teal,472,441],['B', c.lime,490,442],['B', c.mag,512,441],['B', c.mag,532,440],['B', c.lime,550,435],['B', c.grn,568,430],
  ['B', c.pb,177,555],['B', c.lime,202,568],['B', c.pb,222,587],['B', c.lb,243,600],['B', c.grn,255,610],['B', c.tan,245,620],['B', c.red,270,625],['B', c.mag,612,852],['B', c.lb,453,570],['B', c.pm,453,580],['B', c.ora,35,458,8],['B', c.grn,62,445],['B', c.grn,5,475],
  ['C', c.grn,443,455],['C', c.ora,437,440],['C', c.lime,417,432],['C', c.lb,403,440],['C', c.lime,453,430],['C', c.mag,460,405],['C', c.lg,465,385],['C', c.mag,480,365],['C', c.lb,490,343],['C', c.grn,492,350],['C', c.ora,495,320],['C', c.cy,505,330],['C', c.pm,512,302],['C', c.cy,525,283,7],['C', c.ora,532,257],['C', c.lime,548,235],['C', c.grn,555,213],['C', c.mag,538,198],['C', c.lime,550,190],['C', c.lb,565,176],['C', c.pb,585,186],['C', c.teal,592,196],['C', c.red,565,160],['C', c.red,603,158],
  ['C', c.blu,235,350],['C', c.lb,262,340],['C', c.cy,382,135,6],['C', c.mag,230,682],['C', c.pnk,895,25,6],['C', c.lime,890,47],['C', c.lime,798,366],
  ['D', c.lb,152,60],['D', c.lime,262,82,7],['D', c.pnk,305,168,7],['D', c.lb,306,198,7],['D', c.cy,302,225],['D', c.cy2,300,243,6],['D', c.pb,283,248],['D', c.pb,260,272,8],['D', c.pnk,258,282],['D', c.mag,280,290],['D', c.grn,298,287],['D', c.grn,305,300],['D', c.pb,307,265],['D', c.grn,113,295,6],['D', c.kha,108,305],['D', c.pb,53,208],['D', c.tan,52,183],
  ['D', c.pnk,250,868],['D', c.pnk,262,856],['D', c.kha,280,860],['D', c.kha,431,861],['D', c.lb,452,860],['D', c.tan,474,861],['D', c.mag,722,861],['D', c.grn,743,861],['D', c.grn,1121,861,4],['D', c.lime,1240,861,4]
];

const NS = 'http://www.w3.org/2000/svg';
const svg = document.getElementById('graph');
function el(name, attrs) {
  const e = document.createElementNS(NS, name);
  for (const k in attrs) e.setAttribute(k, attrs[k]);
  svg.appendChild(e);
  return e;
}
function toPage(key, flat) {
  const [ox, oy] = ORIGIN[key], out = [];
  for (let i = 0; i < flat.length; i += 2) out.push([ox + flat[i] / 3, oy + flat[i + 1] / 3]);
  return out;
}
function smooth(p) {
  let d = `M${p[0][0].toFixed(1)} ${p[0][1].toFixed(1)}`;
  for (let i = 0; i < p.length - 1; i++) {
    const a = p[Math.max(i - 1, 0)], b = p[i], e = p[i + 1], f = p[Math.min(i + 2, p.length - 1)];
    const c1 = [b[0] + (e[0] - a[0]) / 6, b[1] + (e[1] - a[1]) / 6];
    const c2 = [e[0] - (f[0] - b[0]) / 6, e[1] - (f[1] - b[1]) / 6];
    d += `C${c1[0].toFixed(1)} ${c1[1].toFixed(1)} ${c2[0].toFixed(1)} ${c2[1].toFixed(1)} ${e[0].toFixed(1)} ${e[1].toFixed(1)}`;
  }
  return d;
}
for (const [key, color, width, pts] of CURVES) {
  el('path', { d: smooth(toPage(key, pts)), fill: 'none', stroke: color, 'stroke-width': width * 1.02, 'stroke-linejoin': 'round' });
}
const placed = NODES.map(([key, color, x, y, size]) => {
  const [p] = toPage(key, [x, y]);
  return { p, color, size: size || 5 };
});
// thin black edges between neighbouring nodes
placed.forEach((n, i) => {
  for (let j = i + 1; j < placed.length; j++) {
    const m = placed[j];
    const dist = Math.hypot(n.p[0] - m.p[0], n.p[1] - m.p[1]);
    if (dist < 11) {
      el('path', { d: `M${n.p[0]} ${n.p[1]}L${m.p[0]} ${m.p[1]}`, stroke: '#333', 'stroke-width': 0.7, fill: 'none' });
    }
  }
});
for (const n of placed) {
  const s = n.size;
  el('rect', { x: n.p[0] - s / 2, y: n.p[1] - s / 2, width: s, height: s, rx: 1, fill: n.color, transform: `rotate(25 ${n.p[0]} ${n.p[1]})` });
}
// island drawn as a solid blob
el('path', { d: 'M595 810c6-1 14 1 15 6s-4 10-11 11l-3-1c-2-5-2-11-1-16z', fill: c.mag });
```
